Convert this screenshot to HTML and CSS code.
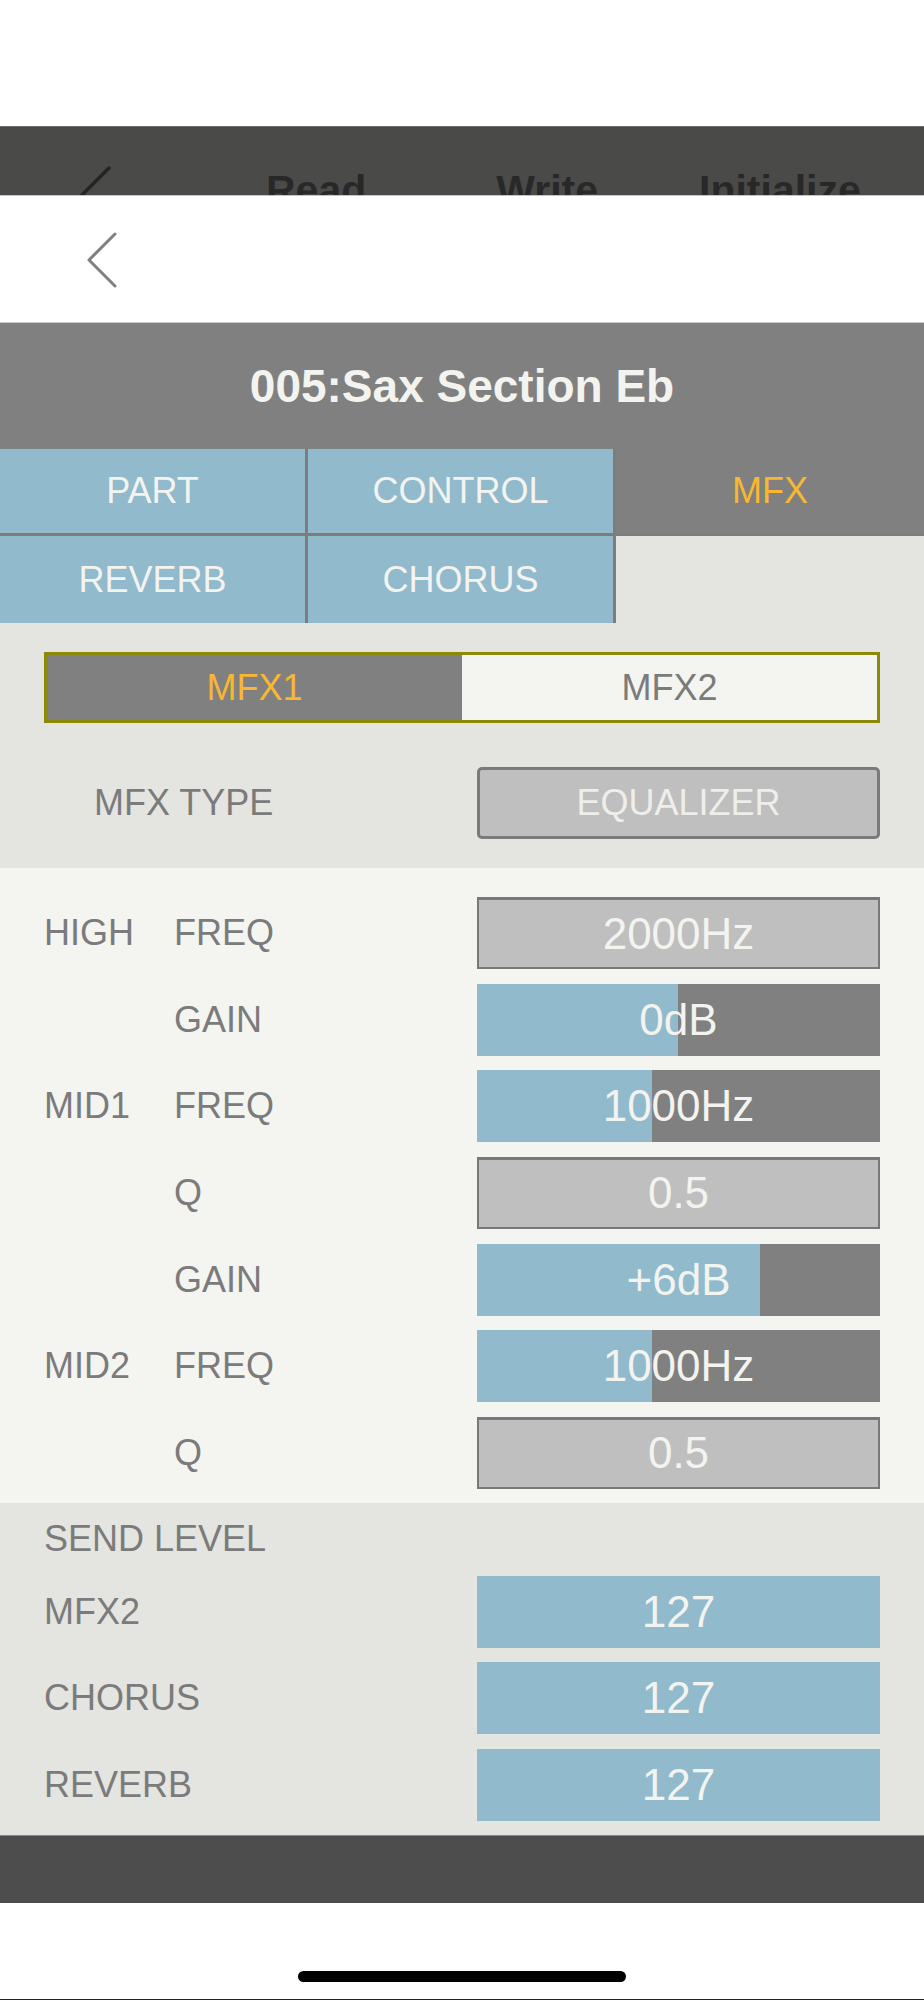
FILE: index.html
```html
<!DOCTYPE html>
<html>
<head>
<meta name="viewport" content="width=device-width, initial-scale=1">
<link rel="stylesheet" href="styles.css">
</head>
<body>

<div class="status"></div>

<!-- editor screen still showing behind the sheet -->
<div class="behind">
  <svg class="behind_back" width="40" height="70" viewBox="0 0 40 70">
    <polyline points="30,2 3,29 30,56" fill="none" stroke="#242424" stroke-width="3.5" stroke-linecap="round" stroke-linejoin="round"/>
  </svg>
  <span class="behind_btn read">Read</span>
  <span class="behind_btn write">Write</span>
  <span class="behind_btn init">Initialize</span>
</div>

<div class="sheet_head">
  <svg class="back" width="34" height="58" viewBox="0 0 34 58">
    <polyline points="29,3 3,29 29,55" fill="none" stroke="#808080" stroke-width="3" stroke-linecap="round" stroke-linejoin="round"/>
  </svg>
</div>

<div class="title">005:Sax Section Eb</div>

<div class="tab">
  <button class="tablinks">PART</button>
  <button class="tablinks">CONTROL</button>
  <button class="tablinks active">MFX</button>
  <button class="tablinks">REVERB</button>
  <button class="tablinks">CHORUS</button>
  <div class="tab_blank"></div>
</div>

<div class="mfx_top">
  <div class="segment">
    <button class="seg_btn active">MFX1</button>
    <button class="seg_btn">MFX2</button>
  </div>
  <div class="type_row">
    <span class="type_label">MFX TYPE</span>
    <button class="type_btn">EQUALIZER</button>
  </div>
</div>

<div class="eq">
  <div class="row">
    <span class="lbl">HIGH</span><span class="lbl">FREQ</span>
    <div class="val box">2000Hz</div>
  </div>
  <div class="row">
    <span class="lbl"></span><span class="lbl">GAIN</span>
    <div class="val bar" style="--v: 50%">0dB</div>
  </div>
  <div class="row">
    <span class="lbl">MID1</span><span class="lbl">FREQ</span>
    <div class="val bar" style="--v: 43.4%">1000Hz</div>
  </div>
  <div class="row">
    <span class="lbl"></span><span class="lbl">Q</span>
    <div class="val box">0.5</div>
  </div>
  <div class="row">
    <span class="lbl"></span><span class="lbl">GAIN</span>
    <div class="val bar" style="--v: 70.2%">+6dB</div>
  </div>
  <div class="row">
    <span class="lbl">MID2</span><span class="lbl">FREQ</span>
    <div class="val bar" style="--v: 43.4%">1000Hz</div>
  </div>
  <div class="row">
    <span class="lbl"></span><span class="lbl">Q</span>
    <div class="val box">0.5</div>
  </div>
</div>

<div class="send">
  <div class="send_head">SEND LEVEL</div>
  <div class="send_rows">
    <div class="srow">
      <span class="lbl">MFX2</span>
      <div class="val bar" style="--v: 100%">127</div>
    </div>
    <div class="srow">
      <span class="lbl">CHORUS</span>
      <div class="val bar" style="--v: 100%">127</div>
    </div>
    <div class="srow">
      <span class="lbl">REVERB</span>
      <div class="val bar" style="--v: 100%">127</div>
    </div>
  </div>
</div>

<div class="bottombar"></div>

<div class="home">
  <div class="home_ind"></div>
</div>

</body>
</html>
```

FILE: styles.css
```css
html, body {
    margin: 0;
    padding: 0;
}

body {
    width: 924px;
    font-family: "Liberation Sans", Arial, sans-serif;
    background-color: #ffffff;
}

button {
    font-family: inherit;
    border: none;
    outline: none;
    margin: 0;
    padding: 0;
    cursor: pointer;
}

.status {
    height: 126px;
    background-color: #ffffff;
}

.behind {
    height: 68px;
    border-top: 1px solid #6c6c6a;
    background-color: #4a4a48;
    overflow: hidden;
    display: flex;
    align-items: flex-start;
}

.behind_back {
    flex: none;
    margin: 39px 0 0 79px;
}

.behind_btn {
    font-size: 41px;
    font-weight: bold;
    color: #282828;
    margin-top: 40px;
    line-height: 47px;
}

.read { margin-left: 147px; }
.write { margin-left: 130px; }
.init { margin-left: 101px; }

.sheet_head {
    height: 126px;
    border-top: 1px solid #c4c4c4;
    background-color: #ffffff;
    display: flex;
    align-items: center;
}

.back {
    margin-left: 86px;
    margin-top: 1px;
}

.title {
    height: 126px;
    border-top: 1px solid #c8c8c8;
    background-color: #808080;
    color: #f3f3ef;
    font-size: 46px;
    font-weight: bold;
    display: flex;
    align-items: center;
    justify-content: center;
}

.tab {
    display: grid;
    grid-template-columns: 305px 305px 1fr;
    grid-template-rows: 84px 87px;
    column-gap: 3px;
    row-gap: 3px;
    background-color: #7d7d7d;
}

.tab button {
    background-color: #91bacc;
    color: #f3f3ef;
    font-size: 36px;
    text-align: center;
}

.tab button.active {
    background-color: #808080;
    color: #f8b730;
}

.tab_blank {
    background-color: #e4e4e0;
}

.mfx_top {
    background-color: #e4e4e0;
    padding: 29px 44px 29px 44px;
}

.segment {
    display: flex;
    height: 71px;
    box-sizing: border-box;
    border: 3px solid #8b8a08;
}

.seg_btn {
    flex: 1;
    background-color: #f4f4f0;
    color: #7b7b7b;
    font-size: 36px;
}

.seg_btn.active {
    background-color: #808080;
    color: #f8b730;
}

.type_row {
    display: flex;
    align-items: center;
    margin-top: 44px;
    height: 72px;
}

.type_label {
    width: 433px;
    padding-left: 50px;
    box-sizing: border-box;
    font-size: 36px;
    color: #7b7b7b;
}

.type_btn {
    width: 403px;
    height: 72px;
    box-sizing: border-box;
    border: 3px solid #7a7a7a;
    border-radius: 5px;
    background-color: #bfbfbf;
    color: #eeeeea;
    font-size: 36px;
}

.eq {
    background-color: #f4f4f0;
    padding: 29px 44px 14px 44px;
    display: flex;
    flex-direction: column;
    gap: 14.67px;
}

.row {
    display: grid;
    grid-template-columns: 130px 303px 403px;
    align-items: center;
    height: 72px;
}

.lbl {
    font-size: 36px;
    color: #7b7b7b;
}

.val {
    height: 72px;
    box-sizing: border-box;
    display: flex;
    align-items: center;
    justify-content: center;
    font-size: 44px;
    color: #f3f3ef;
}

.val.box {
    background-color: #bfbfbf;
    border: 2px solid #787878;
    border-top-width: 3px;
}

.val.bar {
    background: linear-gradient(to right, #91bacc var(--v), #808080 var(--v));
}

.send {
    background-color: #e4e4e0;
    padding: 15px 44px 14px 44px;
}

.send_head {
    font-size: 36px;
    line-height: 42px;
    color: #7b7b7b;
    margin-bottom: 16px;
}

.send_rows {
    display: flex;
    flex-direction: column;
    gap: 14.5px;
}

.srow {
    display: grid;
    grid-template-columns: 433px 403px;
    align-items: center;
    height: 72px;
}

.bottombar {
    height: 67px;
    border-top: 1px solid #8a8a88;
    background-color: #4d4d4d;
}

.home {
    height: 96px;
    border-bottom: 1px solid #222222;
    background-color: #ffffff;
    display: flex;
    justify-content: center;
}

.home_ind {
    width: 328px;
    height: 11px;
    margin-top: 68px;
    border-radius: 6px;
    background-color: #000000;
}
```
